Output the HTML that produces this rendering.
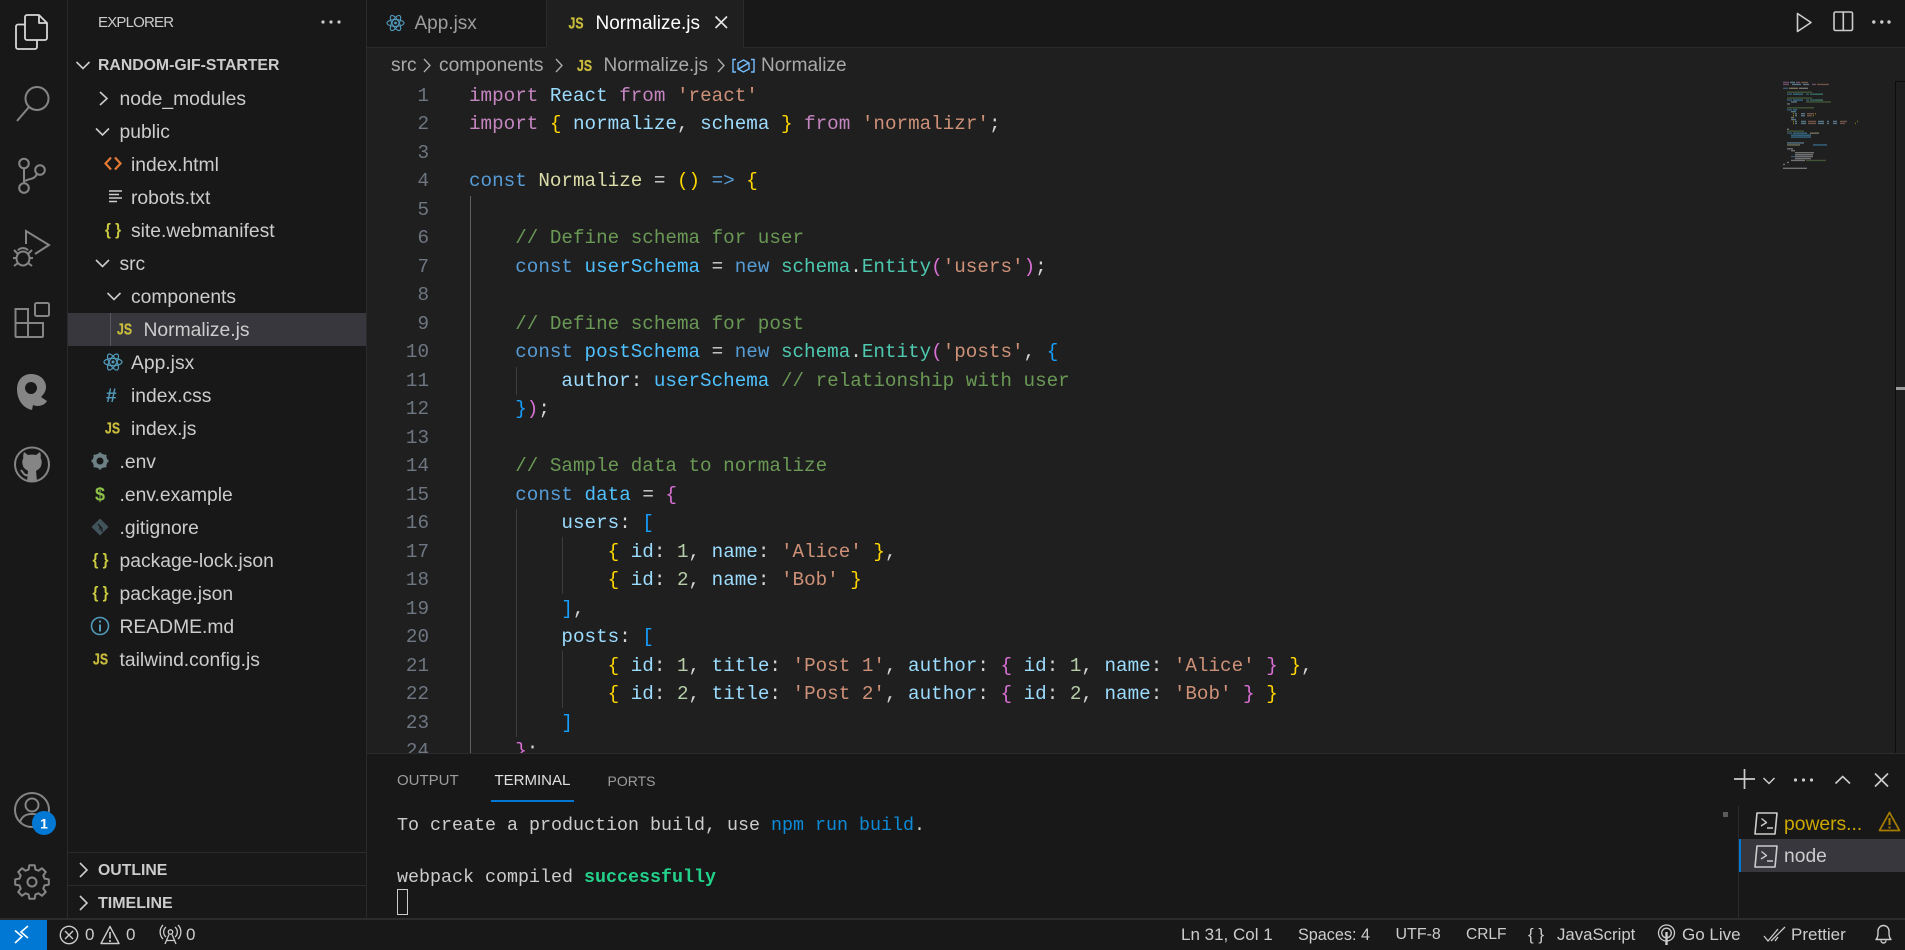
<!DOCTYPE html>
<html><head><meta charset="utf-8"><title>Normalize.js</title>
<style>
html,body{margin:0;padding:0;background:#181818;}
#app{position:relative;width:1905px;height:950px;overflow:hidden;background:#181818;font-family:"Liberation Sans",sans-serif;color:#ccc;}
.a{position:absolute;white-space:pre;}
.box{position:absolute;}
.r{position:absolute;height:33px;line-height:33px;font-size:19.3px;color:#ccc;white-space:pre;margin-top:1px;}
.h{position:absolute;height:33px;line-height:33px;font-size:15.8px;font-weight:bold;color:#ccc;white-space:pre;}
.st{position:absolute;top:920px;height:30px;line-height:30px;font-size:17px;color:#ccc;white-space:pre;}
#code,#nums{position:absolute;top:81.75px;font-family:"Liberation Mono",monospace;font-size:19.25px;line-height:28.5px;white-space:pre;margin:0;}
#code{left:469px;color:#d4d4d4;}
#nums{left:380px;width:49px;text-align:right;color:#6e7681;}
#clip{position:absolute;left:367px;top:0;width:1528px;height:753px;overflow:hidden;}
#clip>pre{margin-left:-367px;}
#term{position:absolute;left:397px;top:813px;font-family:"Liberation Mono",monospace;font-size:18.33px;line-height:26px;color:#ccc;white-space:pre;margin:0;}
.k{color:#c586c0}.v{color:#9cdcfe}.c{color:#4fc1ff}.b{color:#569cd6}.s{color:#ce9178}.g{color:#6a9955}.f{color:#dcdcaa}.t{color:#4ec9b0}.y{color:#ffd700}.p{color:#da70d6}.u{color:#179fff}.n{color:#b5cea8}
svg{position:absolute;left:0;top:0;}
</style></head>
<body><div id="app">

<!-- backgrounds -->
<div class="box" style="left:67px;top:0;width:1px;height:918px;background:#2b2b2b"></div>
<div class="box" style="left:366px;top:0;width:1px;height:918px;background:#2b2b2b"></div>
<div class="box" style="left:367px;top:48px;width:1538px;height:705px;background:#1f1f1f"></div>
<div class="box" style="left:546px;top:0;width:197px;height:48px;background:#1f1f1f"></div>
<div class="box" style="left:367px;top:47px;width:179px;height:1px;background:#2b2b2b"></div>
<div class="box" style="left:743px;top:47px;width:1162px;height:1px;background:#2b2b2b"></div>
<div class="box" style="left:546px;top:0;width:1px;height:47px;background:#2b2b2b"></div>
<div class="box" style="left:743px;top:0;width:1px;height:47px;background:#2b2b2b"></div>
<div class="box" style="left:367px;top:753px;width:1538px;height:1px;background:#2b2b2b"></div>
<div class="box" style="left:0;top:918px;width:1905px;height:2px;background:#2b2b2b"></div>
<div class="box" style="left:68px;top:312.5px;width:298px;height:33px;background:#37373d"></div>
<div class="box" style="left:68px;top:852px;width:298px;height:1px;background:#2b2b2b"></div>
<div class="box" style="left:68px;top:885px;width:298px;height:1px;background:#2b2b2b"></div>
<div class="box" style="left:110px;top:312.5px;width:1px;height:33px;background:#585858"></div>
<div class="box" style="left:1738px;top:806px;width:1px;height:112px;background:#2b2b2b"></div>
<div class="box" style="left:1739px;top:839px;width:166px;height:33px;background:#37373d"></div>
<div class="box" style="left:1739px;top:839px;width:2px;height:33px;background:#0078d4"></div>
<div class="box" style="left:1723px;top:812px;width:5px;height:5px;background:#5a5a5a"></div>
<div class="box" style="left:0;top:920px;width:47px;height:30px;background:#0078d4"></div>
<div class="box" style="left:491px;top:800px;width:83px;height:1.5px;background:#0078d4"></div>

<!-- guides -->
<div class="box" style="left:470px;top:196px;width:1px;height:557px;background:#606060"></div>
<div class="box" style="left:516px;top:367px;width:1px;height:28px;background:#3c3c3c"></div>
<div class="box" style="left:516px;top:509px;width:1px;height:228px;background:#3c3c3c"></div>
<div class="box" style="left:562px;top:537px;width:1px;height:57px;background:#3c3c3c"></div>
<div class="box" style="left:562px;top:651px;width:1px;height:57px;background:#3c3c3c"></div>
<div class="box" style="left:1895px;top:81px;width:10px;height:1px;background:#0c0c0c"></div>
<div class="box" style="left:1895px;top:81px;width:1px;height:672px;background:#0c0c0c"></div>
<div class="box" style="left:1896px;top:387px;width:9px;height:3px;background:#9a9a9a"></div>

<!-- sidebar -->
<div class="a" style="left:98px;top:10px;height:26px;line-height:26px;font-size:15px;letter-spacing:-.8px;color:#ccc">EXPLORER</div>
<div class="h" style="left:98px;top:48.5px">RANDOM-GIF-STARTER</div>
<div class="r" style="left:119.5px;top:81.5px">node_modules</div>
<div class="r" style="left:119.5px;top:114.5px">public</div>
<div class="r" style="left:131px;top:147.5px">index.html</div>
<div class="r" style="left:131px;top:180.5px">robots.txt</div>
<div class="r" style="left:131px;top:213.5px">site.webmanifest</div>
<div class="r" style="left:119.5px;top:246.5px">src</div>
<div class="r" style="left:131px;top:279.5px">components</div>
<div class="r" style="left:143.5px;top:312.5px">Normalize.js</div>
<div class="r" style="left:131px;top:345.5px">App.jsx</div>
<div class="r" style="left:131px;top:378.5px">index.css</div>
<div class="r" style="left:131px;top:411.5px">index.js</div>
<div class="r" style="left:119.5px;top:444.5px">.env</div>
<div class="r" style="left:119.5px;top:477.5px">.env.example</div>
<div class="r" style="left:119.5px;top:510.5px">.gitignore</div>
<div class="r" style="left:119.5px;top:543.5px">package-lock.json</div>
<div class="r" style="left:119.5px;top:576.5px">package.json</div>
<div class="r" style="left:119.5px;top:609.5px">README.md</div>
<div class="r" style="left:119.5px;top:642.5px">tailwind.config.js</div>
<div class="h" style="left:98px;top:853.5px">OUTLINE</div>
<div class="h" style="left:98px;top:886.5px;font-size:16px">TIMELINE</div>

<!-- tabs -->
<div class="a" style="left:414.5px;top:9px;height:30px;line-height:30px;font-size:19px;color:#9d9d9d">App.jsx</div>
<div class="a" style="left:595.5px;top:9px;height:30px;line-height:30px;font-size:19px;color:#fff">Normalize.js</div>

<!-- breadcrumbs -->
<div class="a" style="left:391px;top:51px;height:30px;line-height:30px;font-size:19.2px;color:#a9a9a9">src</div>
<div class="a" style="left:439px;top:51px;height:30px;line-height:30px;font-size:19.2px;color:#a9a9a9">components</div>
<div class="a" style="left:603.5px;top:51px;height:30px;line-height:30px;font-size:19px;color:#a9a9a9">Normalize.js</div>
<div class="a" style="left:761px;top:51px;height:30px;line-height:30px;font-size:19px;color:#a9a9a9">Normalize</div>

<!-- code -->
<div id="clip">
<pre id="nums">1
2
3
4
5
6
7
8
9
10
11
12
13
14
15
16
17
18
19
20
21
22
23
24</pre>
<pre id="code"><span class="k">import</span> <span class="v">React</span> <span class="k">from</span> <span class="s">'react'</span>
<span class="k">import</span> <span class="y">{</span> <span class="v">normalize</span>, <span class="v">schema</span> <span class="y">}</span> <span class="k">from</span> <span class="s">'normalizr'</span>;

<span class="b">const</span> <span class="f">Normalize</span> = <span class="y">()</span> <span class="b">=&gt;</span> <span class="y">{</span>

    <span class="g">// Define schema for user</span>
    <span class="b">const</span> <span class="c">userSchema</span> = <span class="b">new</span> <span class="t">schema</span>.<span class="t">Entity</span><span class="p">(</span><span class="s">'users'</span><span class="p">)</span>;

    <span class="g">// Define schema for post</span>
    <span class="b">const</span> <span class="c">postSchema</span> = <span class="b">new</span> <span class="t">schema</span>.<span class="t">Entity</span><span class="p">(</span><span class="s">'posts'</span>, <span class="u">{</span>
        <span class="v">author</span>: <span class="c">userSchema</span> <span class="g">// relationship with user</span>
    <span class="u">}</span><span class="p">)</span>;

    <span class="g">// Sample data to normalize</span>
    <span class="b">const</span> <span class="c">data</span> = <span class="p">{</span>
        <span class="v">users</span>: <span class="u">[</span>
            <span class="y">{</span> <span class="v">id</span>: <span class="n">1</span>, <span class="v">name</span>: <span class="s">'Alice'</span> <span class="y">}</span>,
            <span class="y">{</span> <span class="v">id</span>: <span class="n">2</span>, <span class="v">name</span>: <span class="s">'Bob'</span> <span class="y">}</span>
        <span class="u">]</span>,
        <span class="v">posts</span>: <span class="u">[</span>
            <span class="y">{</span> <span class="v">id</span>: <span class="n">1</span>, <span class="v">title</span>: <span class="s">'Post 1'</span>, <span class="v">author</span>: <span class="p">{</span> <span class="v">id</span>: <span class="n">1</span>, <span class="v">name</span>: <span class="s">'Alice'</span> <span class="p">}</span> <span class="y">}</span>,
            <span class="y">{</span> <span class="v">id</span>: <span class="n">2</span>, <span class="v">title</span>: <span class="s">'Post 2'</span>, <span class="v">author</span>: <span class="p">{</span> <span class="v">id</span>: <span class="n">2</span>, <span class="v">name</span>: <span class="s">'Bob'</span> <span class="p">}</span> <span class="y">}</span>
        <span class="u">]</span>
    <span class="p">}</span>;</pre>
</div>

<!-- panel -->
<div class="a" style="left:397px;top:766px;height:30px;line-height:30px;font-size:15px;color:#9d9d9d">OUTPUT</div>
<div class="a" style="left:494.5px;top:766px;height:30px;line-height:30px;font-size:15px;color:#e0e0e0">TERMINAL</div>
<div class="a" style="left:607.5px;top:766px;height:30px;line-height:30px;font-size:14px;color:#9d9d9d">PORTS</div>
<pre id="term">To create a production build, use <span style="color:#0e8bd8">npm run build</span>.

webpack compiled <span style="color:#23d18b;font-weight:bold">successfully</span></pre>
<div class="box" style="left:397px;top:889px;width:9px;height:24px;border:1px solid #ccc"></div>
<div class="r" style="left:1784px;top:806.5px;color:#cca700">powers...</div>
<div class="r" style="left:1784px;top:839px">node</div>

<!-- status -->
<div class="st" style="left:85px">0</div>
<div class="st" style="left:126px">0</div>
<div class="st" style="left:186px">0</div>
<div class="st" style="left:1181px">Ln 31, Col 1</div>
<div class="st" style="left:1298px;font-size:16.2px">Spaces: 4</div>
<div class="st" style="left:1395.5px;font-size:16px">UTF-8</div>
<div class="st" style="left:1466px;font-size:15.5px">CRLF</div>
<div class="st" style="left:1528px">{ }</div>
<div class="st" style="left:1557px;font-size:16.8px">JavaScript</div>
<div class="st" style="left:1682px">Go Live</div>
<div class="st" style="left:1791px">Prettier</div>

<!-- all icons, page coordinates -->
<svg width="1905" height="950" viewBox="0 0 1905 950" fill="none">
  <!-- activity bar -->
  <g stroke="#d7d7d7" stroke-width="1.8" stroke-linejoin="round">
    <path d="M25 24.5H18a2 2 0 0 0-2 2V47a2 2 0 0 0 2 2H35a2 2 0 0 0 2-2V40"/>
    <path d="M27 15H39L47 23V38a2 2 0 0 1-2 2H27a2 2 0 0 1-2-2V17a2 2 0 0 1 2-2Z"/>
    <path d="M39 15V23H47"/>
  </g>
  <g stroke="#858585" stroke-width="2">
    <circle cx="37" cy="98.5" r="11.5"/><path d="M29 107L17 121"/>
    <circle cx="24" cy="163.5" r="4.8"/><circle cx="40" cy="170" r="4.8"/><circle cx="24" cy="188" r="4.8"/>
    <path d="M24 168.5V183M25 181C30 178 34 180 37 174"/>
    <path d="M26 244V231L49 245L35 254"/>
    <ellipse cx="23" cy="258.5" rx="6.5" ry="7"/>
    <path d="M18 250.5a5.5 4 0 0 1 10 0 M14 250l4 4 M32 250l-4 4 M13 258h4 M33 258h-4 M14 266l4-3 M32 266l-4-3"/>
    <path d="M15.5 309H28V337H16.5a1 1 0 0 1-1-1Z M15.5 323H43V336a1 1 0 0 1-1 1H28"/>
    <rect x="35" y="303" width="14" height="13" rx="1.5"/>
    <circle cx="32" cy="464.5" r="17"/>
    <circle cx="32" cy="810" r="17"/><circle cx="32" cy="805" r="6.5"/>
    <path d="M20 822c2-6 6-8 12-8 4 0 7 1 9 3"/>
    <path stroke-linejoin="round" transform="translate(32 882)" d="M16.79 2.66L12.56 3.36L11.26 6.5L13.75 9.99L9.99 13.75L6.5 11.26L3.36 12.56L2.66 16.79L-2.66 16.79L-3.36 12.56L-6.5 11.26L-9.99 13.75L-13.75 9.99L-11.26 6.5L-12.56 3.36L-16.79 2.66L-16.79 -2.66L-12.56 -3.36L-11.26 -6.5L-13.75 -9.99L-9.99 -13.75L-6.5 -11.26L-3.36 -12.56L-2.66 -16.79L2.66 -16.79L3.36 -12.56L6.5 -11.26L9.99 -13.75L13.75 -9.99L11.26 -6.5L12.56 -3.36L16.79 -2.66Z"/>
    <circle cx="32" cy="882" r="4.5"/>
  </g>
  <path fill="#858585" fill-rule="evenodd" d="M31 374C40 374 46 380 46 387C46 391 44 394 41 397L47 401C44 406 38 407 33 405L32 410C23 408 17 400 17 389C17 380 23 374 31 374ZM31 382a6 6 0 1 0 .01 0Z"/>
  <path fill="#858585" d="M24 452L28 455C30 454.5 34 454.5 36 455L40 452C41 455 41 457 40.5 458C42 460 42 463 41 466C40 469 37 470 36 471L37 481H27L28 471C27 470 24 469 23 466C22 463 22 460 23.5 458C23 457 23 455 24 452Z"/>
  <path stroke="#858585" stroke-width="2" d="M21 470C24 474 25 476 28 475"/>
  <circle cx="44" cy="823" r="12" fill="#0078d4"/>
  <text x="44" y="828.5" text-anchor="middle" font-family="Liberation Sans" font-weight="bold" font-size="14" fill="#fff">1</text>

  <!-- sidebar -->
  <circle cx="323" cy="22" r="1.6" fill="#ccc"/><circle cx="331" cy="22" r="1.6" fill="#ccc"/><circle cx="339" cy="22" r="1.6" fill="#ccc"/>
  <g stroke="#ccc" stroke-width="1.6">
    <path d="M76.5 62L83 68.5L89.5 62"/>
    <path d="M100 92L107 98.5L100 105"/>
    <path d="M96 128.5L102.5 135L109 128.5"/>
    <path d="M96 260L102.5 266.5L109 260"/>
    <path d="M107.5 293L114 299.5L120.5 293"/>
    <path d="M80 863L87 870L80 877"/>
    <path d="M80 896L87 903L80 910"/>
  </g>
  <path stroke="#e37933" stroke-width="2.2" d="M111 157.5L105.5 163.5L111 169.5M115 157.5L120.5 163.5L115 169.5"/>
  <path stroke="#ccc" stroke-width="1.5" d="M109 191H122M109 194.5H119M109 198H122M109 201.5H117"/>
  <g font-family="Liberation Sans" font-weight="bold" font-size="17">
    <text x="105" y="235" font-size="17" fill="#cbcb41" textLength="16" lengthAdjust="spacingAndGlyphs">{ }</text>
    <text x="117" y="334.5" fill="#c9bb3c" stroke="#c9bb3c" stroke-width=".3" font-size="16" textLength="15" lengthAdjust="spacingAndGlyphs">JS</text>
    <text x="105" y="433.5" fill="#c9bb3c" stroke="#c9bb3c" stroke-width=".3" font-size="16" textLength="15" lengthAdjust="spacingAndGlyphs">JS</text>
    <text x="106" y="402" fill="#519aba" font-size="19">#</text>
    <text x="95" y="500.5" fill="#8dc149" font-size="18">$</text>
    <text x="92.5" y="565" font-size="17" fill="#cbcb41" textLength="16" lengthAdjust="spacingAndGlyphs">{ }</text>
    <text x="92.5" y="598" font-size="17" fill="#cbcb41" textLength="16" lengthAdjust="spacingAndGlyphs">{ }</text>
    <text x="93" y="664.5" fill="#c9bb3c" stroke="#c9bb3c" stroke-width=".3" font-size="16" textLength="15" lengthAdjust="spacingAndGlyphs">JS</text>
    <text x="568.5" y="28.5" fill="#c9bb3c" stroke="#c9bb3c" stroke-width=".3" font-size="16" textLength="15" lengthAdjust="spacingAndGlyphs">JS</text>
    <text x="577" y="71" fill="#c9bb3c" stroke="#c9bb3c" stroke-width=".3" font-size="16" textLength="15" lengthAdjust="spacingAndGlyphs">JS</text>
  </g>
  <g stroke="#519aba" stroke-width="1.2" transform="translate(113 362)">
    <ellipse rx="9" ry="3.6"/><ellipse rx="9" ry="3.6" transform="rotate(60)"/><ellipse rx="9" ry="3.6" transform="rotate(120)"/>
    <circle r="1.5" fill="#519aba" stroke="none"/>
  </g>
  <g stroke="#519aba" stroke-width="1.1" transform="translate(395.5 23)">
    <ellipse rx="8.5" ry="3.4"/><ellipse rx="8.5" ry="3.4" transform="rotate(60)"/><ellipse rx="8.5" ry="3.4" transform="rotate(120)"/>
    <circle r="1.4" fill="#519aba" stroke="none"/>
  </g>
  <!-- .env gear -->
  <g transform="translate(100 461)">
    <circle r="5.5" stroke="#6d8086" stroke-width="4"/>
    <path stroke="#6d8086" stroke-width="2.6" d="M0-8.5V-6M0 8.5V6M-8.5 0H-6M8.5 0H6M-6 -6L-4.2 -4.2M6 6L4.2 4.2M-6 6L-4.2 4.2M6 -6L4.2 -4.2"/>
  </g>
  <path fill="#41535b" d="M100 518.5L108.5 527L100 535.5L91.5 527Z"/>
  <path stroke="#181818" stroke-width="1.2" d="M98 524L102 528.5V532M100 526V530"/>
  <circle cx="100" cy="626" r="8.5" stroke="#519aba" stroke-width="1.6"/>
  <path stroke="#519aba" stroke-width="2" d="M100 624.5V631.5M100 620.5V622.5"/>

  <!-- tab close -->
  <path stroke="#e6e6e6" stroke-width="1.6" d="M715.5 16.5L727 28M727 16.5L715.5 28"/>

  <!-- breadcrumb separators and symbol -->
  <g stroke="#a9a9a9" stroke-width="1.4">
    <path d="M424 59L430 65.5L424 72M556 59L562 65.5L556 72M718 59L724 65.5L718 72"/>
  </g>
  <g stroke="#75beff" stroke-width="1.4">
    <path d="M736 59.5H733V72H736M751 59.5H754V72H751"/>
    <path d="M743.5 60L749 63V69L743.5 72L738 69V63Z"/>
    <path d="M738.5 69L748.5 63"/>
  </g>

  <!-- editor actions -->
  <path stroke="#ccc" stroke-width="1.6" stroke-linejoin="round" d="M1797.5 13.5V31.5L1811 22.5Z"/>
  <rect x="1834" y="12" width="18.5" height="18.5" rx="1.5" stroke="#ccc" stroke-width="1.6"/>
  <path stroke="#ccc" stroke-width="1.6" d="M1843.3 12V30.5"/>
  <circle cx="1873.8" cy="22" r="1.7" fill="#ccc"/><circle cx="1881.8" cy="22" r="1.7" fill="#ccc"/><circle cx="1889" cy="22" r="1.7" fill="#ccc"/>

  <!-- minimap -->
  <g stroke-width="1.4" opacity=".45" transform="translate(0 2.05) scale(1 .975)">
    <path stroke="#c586c0" d="M1783 82.5h6M1796 82.5h4M1783 84.5h6M1812 84.5h4"/>
    <path stroke="#9cdcfe" d="M1790 82.5h5M1792 84.5h9M1803 84.5h6M1791 102.5h6M1791 112.5h5M1795 114.5h2M1801 114.5h4M1795 116.5h2M1801 116.5h4M1791 120.5h5M1795 122.5h2M1801 122.5h5M1818 122.5h6M1827 122.5h2M1833 122.5h4M1795 124.5h2M1801 124.5h5M1818 124.5h6M1827 124.5h2M1833 124.5h4M1787 144.5h17"/>
    <path stroke="#ce9178" d="M1801 82.5h7M1817 84.5h12M1816 94.5h7M1816 100.5h7M1807 114.5h7M1807 116.5h5M1808 122.5h8M1840 122.5h7M1808 124.5h8M1840 124.5h5"/>
    <path stroke="#569cd6" d="M1783 88.5h5M1787 94.5h5M1806 94.5h3M1787 100.5h5M1806 100.5h3M1787 110.5h5M1787 134.5h5M1791 158.5h18"/>
    <path stroke="#6a9955" d="M1787 92.5h25M1787 98.5h25M1806 102.5h25M1787 108.5h27M1787 132.5h17M1806 162.5h20"/>
    <path stroke="#dcdcaa" d="M1789 88.5h9M1810 134.5h9M1787 146.5h13"/>
    <path stroke="#4ec9b0" d="M1810 94.5h13M1810 100.5h13"/>
    <path stroke="#4fc1ff" d="M1793 94.5h10M1793 100.5h10M1793 110.5h4M1793 134.5h14M1791 136.5h20M1791 138.5h20M1813 146.5h14"/>
    <path stroke="#d4d4d4" d="M1799 88.5h9M1787 104.5h3M1791 118.5h3M1787 130.5h2M1787 150.5h6M1791 152.5h4M1795 154.5h19M1795 156.5h18M1795 158.5h18M1795 160.5h16M1791 162.5h14M1787 164.5h2M1783 166.5h2M1783 170.5h24"/>
    <path stroke="#ffd700" d="M1793 114.5h1M1815 114.5h1M1793 116.5h1M1813 116.5h1M1793 122.5h1M1857 122.5h1M1793 124.5h1M1855 124.5h1"/>
  </g>

  <!-- panel actions -->
  <path stroke="#ccc" stroke-width="1.7" d="M1734 779H1755M1744.5 769V789"/>
  <path stroke="#ccc" stroke-width="1.5" d="M1763.5 778L1769 783.5L1774.5 778"/>
  <circle cx="1795.5" cy="780" r="1.6" fill="#ccc"/><circle cx="1803.5" cy="780" r="1.6" fill="#ccc"/><circle cx="1811.5" cy="780" r="1.6" fill="#ccc"/>
  <path stroke="#ccc" stroke-width="1.6" d="M1835.5 783.5L1842.7 776.5L1850 783.5"/>
  <path stroke="#ccc" stroke-width="1.7" d="M1875 773.5L1888 786.5M1888 773.5L1875 786.5"/>

  <!-- terminal list icons -->
  <g stroke="#ccc" stroke-width="1.6" stroke-linejoin="round">
    <path d="M1757 813H1777L1775 834H1755Z"/><path d="M1761.5 818.5L1766.5 822.5L1761 826M1767 828H1773" stroke-width="1.4"/>
    <path d="M1757 846H1777L1775 867H1755Z"/><path d="M1761.5 851.5L1766.5 855.5L1761 859M1767 861H1773" stroke-width="1.4"/>
  </g>
  <path stroke="#a67c00" stroke-width="1.8" stroke-linejoin="round" d="M1889.5 812.5L1899.5 830.5H1879.5Z"/>
  <path stroke="#a67c00" stroke-width="2" d="M1889.5 818V825M1889.5 826.5V828.5"/>

  <!-- status bar -->
  <path stroke="#fff" stroke-width="1.6" d="M15 930.5L22 936.5L15 943M28 926L21 932L28 938"/>
  <circle cx="69" cy="935" r="8.7" stroke="#ccc" stroke-width="1.4"/>
  <path stroke="#ccc" stroke-width="1.4" d="M65 931L73 939M73 931L65 939"/>
  <path stroke="#ccc" stroke-width="1.4" stroke-linejoin="round" d="M110 926.5L119 943.5H101Z"/>
  <path stroke="#ccc" stroke-width="1.6" d="M110 932V938.5M110 940V942"/>
  <g stroke="#ccc" stroke-width="1.3">
    <circle cx="170.5" cy="932" r="2.2"/>
    <path d="M169 934.5L165 944M172 934.5L176 944M166.5 940.5H174.5"/>
    <path d="M166 927a6.5 6.5 0 0 0 0 10M175 927a6.5 6.5 0 0 1 0 10M163 925a10 10 0 0 0 0 14M178 925a10 10 0 0 1 0 14"/>
    <circle cx="1666.5" cy="933" r="8"/><circle cx="1666.5" cy="933" r="4.8"/>
    <path stroke-width="2.4" d="M1666.5 932V945"/>
  </g>
  <path stroke="#ccc" stroke-width="1.3" d="M1764 936L1768 941L1778 929M1771 941L1785 927M1775 941L1778 937"/>
  <path stroke="#ccc" stroke-width="1.4" stroke-linejoin="round" d="M1876 939.5C1878 937.5 1878 935 1878 931a5.5 5.5 0 0 1 11 0C1889 935 1889 937.5 1891 939.5Z"/>
  <path stroke="#ccc" stroke-width="1.4" d="M1881 940.5a2.5 2.5 0 0 0 5 0"/>
</svg>

</div></body></html>
